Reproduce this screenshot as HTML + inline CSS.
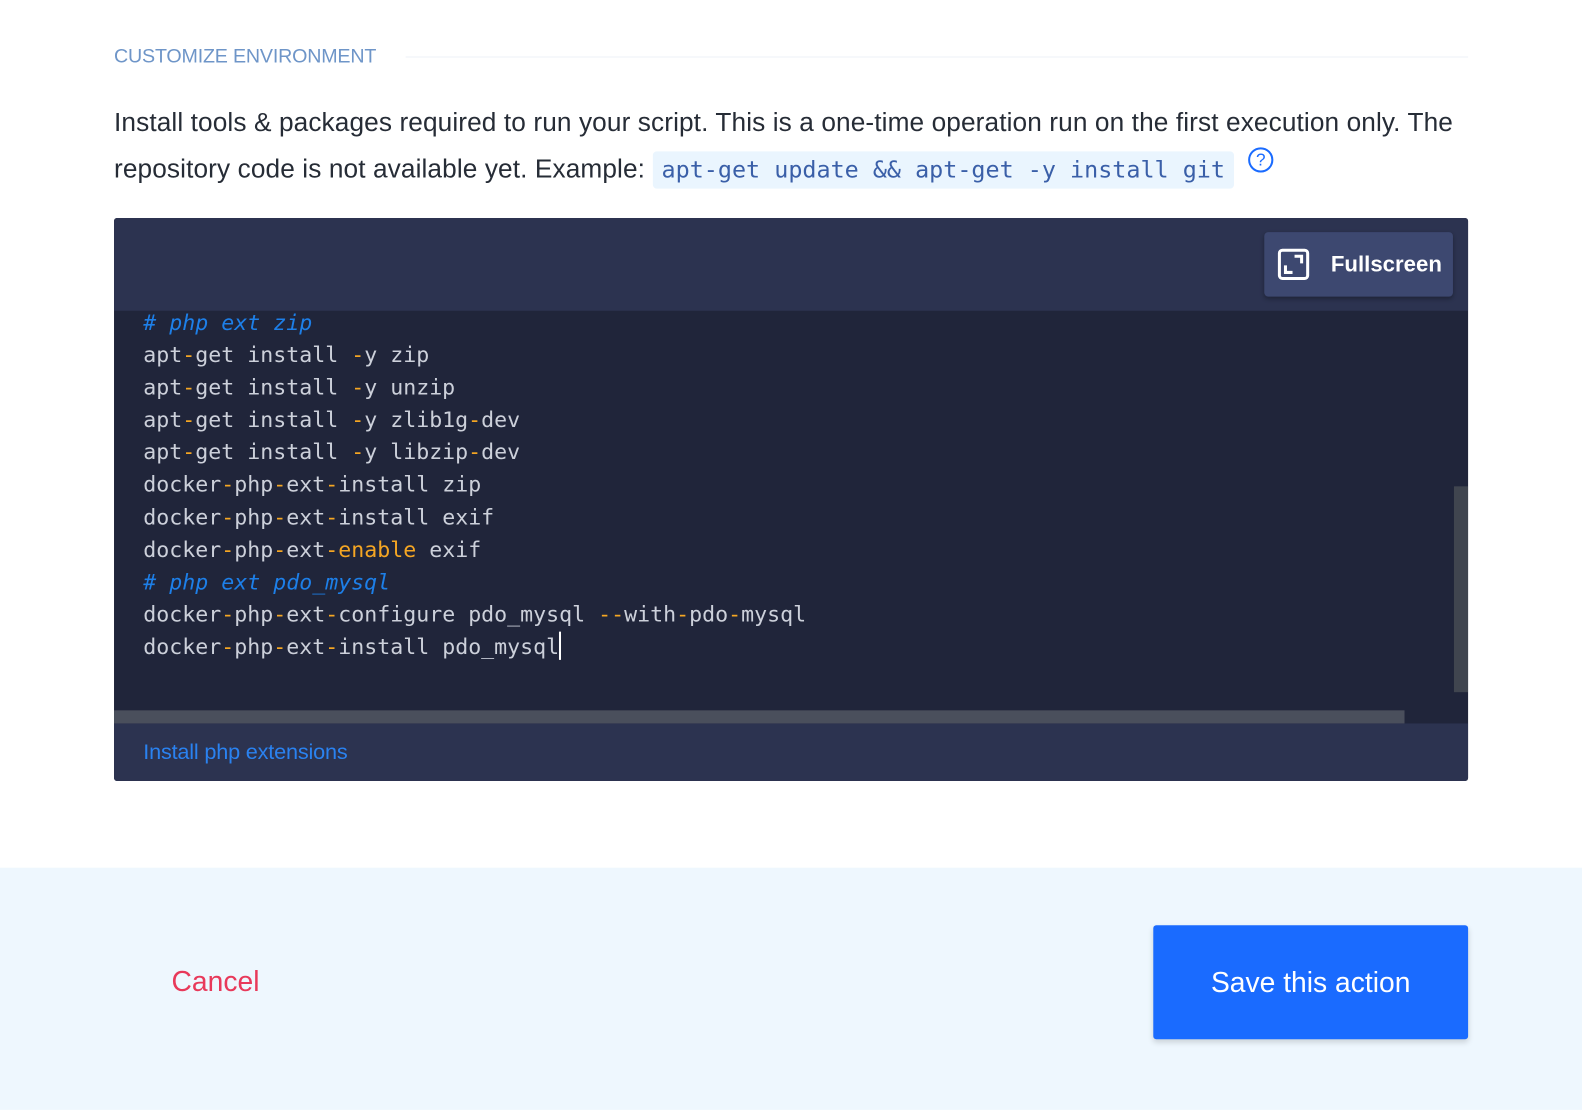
<!DOCTYPE html>
<html><head><meta charset="utf-8"><style>
*{margin:0;padding:0;box-sizing:border-box}
body{width:1582px;height:1096px;background:#fff;font-family:"Liberation Sans",sans-serif;position:relative;overflow:hidden}
#w{position:absolute;left:0;top:0;width:1568px;height:1090px;transform:scale(1.009);transform-origin:0 0}
.hd{position:absolute;left:113px;top:45px;font-size:19.5px;color:#6e95c8;letter-spacing:-0.2px}
.hr{position:absolute;left:402px;right:113px;top:56px;height:1px;background:#eef2f7}
.p{position:absolute;left:113px;top:98px;width:1350px;font-size:26px;line-height:46px;color:#262c36;letter-spacing:0.1px}
.p code{font-family:"DejaVu Sans Mono",monospace;font-size:23.2px;color:#3a5fa8;background:#eaf5fe;padding:5px 9px;border-radius:4px;letter-spacing:0}
.q{display:inline-block;margin-left:14px;vertical-align:12px;width:25px;height:25px;border:2px solid #1a6bff;border-radius:50%;color:#1a6bff;font-size:17px;text-align:center;line-height:21px;letter-spacing:0}
.ed{position:absolute;left:113px;top:216px;width:1342px;height:558px;background:#20253a;border-radius:3px;overflow:hidden}
.eh{height:92px;background:#2c3350}
.fs{position:absolute;right:15px;top:14px;width:187px;height:64px;background:#3d4870;border-radius:4px;color:#fff;font-size:22px;font-weight:bold;line-height:64px;padding-left:66px;box-shadow:0 2px 4px rgba(0,0,0,.3)}
.fs svg{position:absolute;left:13px;top:16px}
.code{position:absolute;left:29px;top:89px;font-family:"DejaVu Sans Mono",monospace;font-size:21.4px;line-height:32.1px;color:#ccd0da;white-space:pre}
.c{color:#1d7fe8;font-style:italic}.o{color:#f5a623}
.cur{display:inline-block;width:2px;height:28px;background:#fff;vertical-align:-6px}
.hs{position:absolute;left:0;top:488px;width:1279px;height:13px;background:#4a4f5c}
.vs{position:absolute;right:0;top:266px;width:14px;height:204px;background:#40454f}
.ef{position:absolute;left:0;top:501px;width:100%;height:57px;background:#2c3350;color:#2a82f0;font-size:21.5px;padding:16px 29px;letter-spacing:-0.2px}
.bt{position:absolute;left:0;top:860px;width:1600px;height:240px;background:#eef7fe}
.cn{position:absolute;left:170px;top:957px;font-size:28px;color:#e8395a}
.sv{position:absolute;left:1143px;top:917px;width:312px;height:113px;background:#1a6bff;border-radius:3px;color:#fff;font-size:28px;text-align:center;line-height:113px;box-shadow:0 3px 6px rgba(0,0,0,.15)}
</style></head><body><div id="w">
<div class="hd">CUSTOMIZE ENVIRONMENT</div><div class="hr"></div>
<div class="p">Install tools &amp; packages required to run your script. This is a one-time operation run on the first execution only. The repository code is not available yet. Example: <code>apt-get update &amp;&amp; apt-get -y install git</code><span class="q">?</span></div>
<div class="ed"><div class="eh"></div>
<div class="fs"><svg width="32" height="32" viewBox="0 0 32 32" fill="none" stroke="#fff" stroke-width="3"><rect x="2" y="2" width="28" height="28" rx="3"/><path d="M8 17v7h7M17 8h7v7"/></svg>Fullscreen</div>
<div class="code"><span class="c"># php ext zip</span>
apt<span class="o">-</span>get install <span class="o">-</span>y zip
apt<span class="o">-</span>get install <span class="o">-</span>y unzip
apt<span class="o">-</span>get install <span class="o">-</span>y zlib1g<span class="o">-</span>dev
apt<span class="o">-</span>get install <span class="o">-</span>y libzip<span class="o">-</span>dev
docker<span class="o">-</span>php<span class="o">-</span>ext<span class="o">-</span>install zip
docker<span class="o">-</span>php<span class="o">-</span>ext<span class="o">-</span>install exif
docker<span class="o">-</span>php<span class="o">-</span>ext<span class="o">-enable</span> exif
<span class="c"># php ext pdo_mysql</span>
docker<span class="o">-</span>php<span class="o">-</span>ext<span class="o">-</span>configure pdo_mysql <span class="o">--</span>with<span class="o">-</span>pdo<span class="o">-</span>mysql
docker<span class="o">-</span>php<span class="o">-</span>ext<span class="o">-</span>install pdo_mysql<span class="cur"></span></div>
<div class="vs"></div><div class="hs"></div>
<div class="ef">Install php extensions</div></div>
<div class="bt"></div>
<div class="cn">Cancel</div>
<div class="sv">Save this action</div>
</div></body></html>
